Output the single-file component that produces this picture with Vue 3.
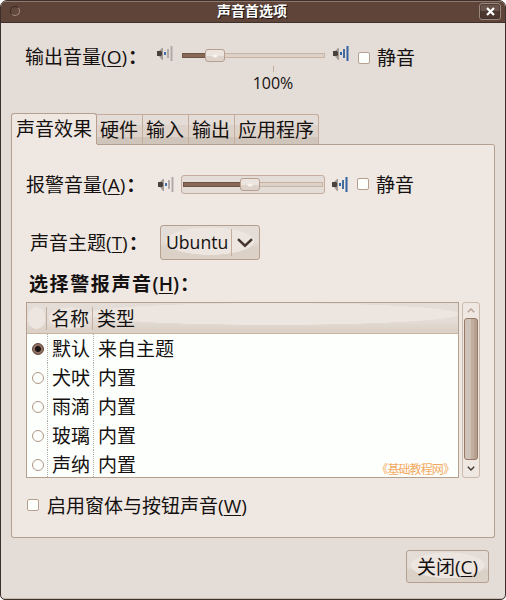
<script setup>
import { ref } from 'vue'

const tabs = ['声音效果', '硬件', '输入', '输出', '应用程序']
const activeTab = ref(0)
const sounds = [
  { name: '默认', type: '来自主题' },
  { name: '犬吠', type: '内置' },
  { name: '雨滴', type: '内置' },
  { name: '玻璃', type: '内置' },
  { name: '声纳', type: '内置' },
]
const selected = ref(0)
const outputMuted = ref(false)
const alertMuted = ref(false)
const windowSounds = ref(false)
</script>

<template>
  <div class="backdrop">
    <div class="window">
      <header class="titlebar">
        <span class="orb"></span>
        <span class="title">声音首选项</span>
        <button class="win-close" aria-label="close">
          <svg width="9" height="9" viewBox="0 0 9 9"><path d="M1 1l7 7M8 1l-7 7" stroke="#fff" stroke-width="2.2" /></svg>
        </button>
      </header>

      <div class="row output-row">
        <label class="txt">输出音量<span class="lat">(<u>O</u>)</span><span class="colon">：</span></label>
        <svg class="speaker" width="16" height="16" viewBox="0 0 16 16">
          <path d="M2 5l3-3h1v12H5l-3-4z" fill="#a39c97" /><path d="M0 5h4l1 1v3l-1 1H0z" fill="#4a403c" />
          <path d="M7 6h2v3H7z" fill="#3d72af" /><path d="M10 3h2v9h-2zM13.5 0h2v15h-2z" fill="#b0aba7" />
        </svg>
        <div class="scale">
          <div class="trough"><div class="fill out"></div><div class="thumb"></div></div>
          <span class="tick"></span>
          <span class="percent">100%</span>
        </div>
        <svg class="speaker" width="16" height="16" viewBox="0 0 16 16">
          <path d="M2 5l3-3h1v12H5l-3-4z" fill="#a39c97" /><path d="M0 5h4l1 1v3l-1 1H0z" fill="#4a403c" />
          <path d="M7 6h2v3H7z" fill="#2c65ab" /><path d="M10 3h2v9h-2z" fill="#436c9c" /><path d="M13.5 0h2v15h-2z" fill="#3263a3" />
        </svg>
        <span class="check" @click="outputMuted = !outputMuted"></span>
        <span class="txt mute">静音</span>
      </div>

      <nav class="tabs">
        <button v-for="(t, i) in tabs" :key="t" :class="['tab', 'txt', { active: i === activeTab }]" @click="activeTab = i">{{ t }}</button>
      </nav>

      <section class="panel">
        <div class="row alert-row">
          <label class="txt">报警音量<span class="lat">(<u>A</u>)</span><span class="colon">：</span></label>
          <svg class="speaker" width="16" height="16" viewBox="0 0 16 16">
            <path d="M2 5l3-3h1v12H5l-3-4z" fill="#a39c97" /><path d="M0 5h4l1 1v3l-1 1H0z" fill="#4a403c" />
            <path d="M7 6h2v3H7z" fill="#3d72af" /><path d="M10 3h2v9h-2zM13.5 0h2v15h-2z" fill="#b0aba7" />
          </svg>
          <div class="focus"><div class="trough"><div class="fill alert"></div><div class="thumb"></div></div></div>
          <svg class="speaker" width="16" height="16" viewBox="0 0 16 16">
            <path d="M2 5l3-3h1v12H5l-3-4z" fill="#a39c97" /><path d="M0 5h4l1 1v3l-1 1H0z" fill="#4a403c" />
            <path d="M7 6h2v3H7z" fill="#2c65ab" /><path d="M10 3h2v9h-2z" fill="#436c9c" /><path d="M13.5 0h2v15h-2z" fill="#3263a3" />
          </svg>
          <span class="check" @click="alertMuted = !alertMuted"></span>
          <span class="txt mute">静音</span>
        </div>

        <div class="row theme-row">
          <label class="txt">声音主题<span class="lat">(<u>T</u>)</span><span class="colon">：</span></label>
          <button class="combo shine">
            <span class="lat combo-text">Ubuntu</span>
            <span class="combo-arrow">
              <svg width="18" height="12" viewBox="0 0 18 12"><path d="M2 2.2l7 6.5 7-6.5" fill="none" stroke="#44352f" stroke-width="2.5" /></svg>
            </span>
          </button>
        </div>

        <h2 class="heading">选择警报声音<span class="lat">(<u>H</u>)</span><span class="colon">：</span></h2>

        <div class="list-area">
          <div class="list">
            <div class="list-head txt">
              <span class="hc h0"></span><span class="hc h1">名称</span><span class="hc h2">类型</span>
            </div>
            <div class="list-body">
              <div v-for="(s, i) in sounds" :key="s.name" class="item txt" @click="selected = i">
                <span class="c0"><i :class="['radio', { on: i === selected }]"></i></span>
                <span class="c1">{{ s.name }}</span>
                <span class="c2">{{ s.type }}</span>
              </div>
              <span class="mark">《基础教程网》</span>
            </div>
          </div>
          <div class="scrollbar">
            <span class="arrow"><svg width="8" height="5" viewBox="0 0 8 5"><path d="M.8 4.2L4 1l3.2 3.2" fill="none" stroke="#b5a294" stroke-width="1.3" /></svg></span>
            <span class="handle"></span>
            <span class="arrow down"><svg width="8" height="5" viewBox="0 0 8 5"><path d="M.8 .8L4 4 7.2 .8" fill="none" stroke="#44352f" stroke-width="1.4" /></svg></span>
          </div>
        </div>

        <div class="row window-row">
          <span class="check" @click="windowSounds = !windowSounds"></span>
          <span class="txt">启用窗体与按钮声音<span class="lat">(<u>W</u>)</span></span>
        </div>
      </section>

      <footer class="footer">
        <button class="close-btn txt shine">关闭<span class="lat">(<u>C</u>)</span></button>
      </footer>
    </div>
  </div>
</template>

<style>
body { background: #fff; }
</style>

<style scoped>
* { box-sizing: border-box; }
button { appearance: none; margin: 0; padding: 0; border: 0; background: none; color: inherit; }
.backdrop { width: 506px; height: 600px; }
.window {
  display: flex; flex-direction: column; width: 506px; height: 600px; overflow: hidden;
  border: 1px solid #3c302d; border-radius: 7px 7px 5px 5px; background: #e4dcd6; color: #141110;
  box-shadow: inset 0 -1px #cabbb0;
}
.txt { font: 19px/32px "Noto Sans CJK SC", sans-serif; white-space: nowrap; }
.lat { font-family: "Open Sans", "Noto Sans", sans-serif; font-size: 19px; line-height: 1; }
.colon { margin-left: 1px; font-weight: 700; }
u { text-decoration: underline; text-decoration-thickness: 1px; text-underline-offset: 2px; }

.titlebar {
  display: grid; grid-template-columns: 30px 1fr 30px; align-items: start; flex: none; height: 22px;
  background: #5e4439; border-top: 1px solid #92786c; border-bottom: 1px solid #3f302b;
}
.orb { width: 10px; height: 10px; margin: 4px 0 0 9px; border-radius: 50%; background: #63493e; border: 1px solid #382a25; border-right-color: #a28b80; border-bottom-color: #a28b80; }
.title { padding-right: 2px; text-align: center; color: #fff; font: bold 14px/16px "Noto Sans CJK SC", sans-serif; text-shadow: 1px 1px 0 #1c1310; }
.win-close { display: flex; align-items: center; justify-content: center; width: 22px; height: 17px; margin: 1px 0 0 4px; border: 1px solid #9b887e; border-radius: 3px; background: linear-gradient(#69534a 50%, #4b3730 50%); box-shadow: inset 0 0 0 1px #35282480; }

.row { display: flex; align-items: flex-start; flex: none; }
.speaker { flex: none; }
.check { flex: none; width: 12px; height: 12px; border: 1px solid #b7a08f; border-radius: 2px; background: #fdfffc; }

.output-row { height: 73px; margin-top: 17px; padding-left: 24px; }
.output-row label { width: 132px; }
.output-row .speaker { margin-top: 6px; }
.scale { display: flex; flex-direction: column; width: 143px; margin: 9px 8px 0 9px; }
.trough { display: grid; align-items: center; height: 13px; background: linear-gradient(#c9b4a4, #c9b4a4) 0 4px / 100% 1px no-repeat, linear-gradient(#c9b4a4, #c9b4a4) 0 8px / 100% 1px no-repeat, linear-gradient(90deg, #c9b4a4 1px, #ddd2c9 1px calc(100% - 1px), #c9b4a4 calc(100% - 1px)) 0 4px / 100% 5px no-repeat; }
.trough > * { grid-area: 1 / 1; }
.fill { height: 5px; background: #876857; border: 1px solid #705344; }
.fill.out { width: 26px; }
.fill.alert { width: 60px; }
.thumb { width: 20px; height: 13px; margin-left: 23px; border: 1px solid #b7a08f; border-radius: 3px; background: radial-gradient(ellipse 4px 2.5px at 50% 55%, #f8f4f1 0 40%, transparent 80%), linear-gradient(#ece4de 50%, #ddd3ca 55%); }
.tick { width: 1px; height: 6px; margin: 4px 0 0 91px; background: #c4ad9c; }
.percent { width: 60px; margin-left: 61px; margin-top: 1px; text-align: center; font: 16px/20px "Open Sans", "Noto Sans", sans-serif; }
.output-row .check { margin: 12px 0 0 9px; }
.mute { margin-left: 7px; }
.output-row .mute { margin-top: 1px; }

.tabs { display: flex; align-items: flex-end; flex: none; height: 31px; padding-left: 10px; }
.tab { height: 30px; width: 46px; padding-left: 3px; text-align: left; line-height: 26px; padding-bottom: 2px; border: 1px solid #c4ad9c; border-left: 0; border-bottom: 0; background: linear-gradient(#e4dcd6 0 10px, #ddd3ca 10px 22px, #d0c5ba 22px); }
.tab:last-child { width: 84px; border-radius: 0 3px 0 0; }
.tab.active { width: 86px; height: 31px; padding-left: 4px; line-height: 28px; border: 1px solid #b5a08f; border-bottom: 0; border-radius: 3px 3px 0 0; background: #efe7e1; }

.panel {
  display: flex; flex-direction: column; flex: none; width: 484px; height: 394px; margin-left: 10px;
  border: 1px solid #b5a08f; border-top: 0; border-radius: 0 3px 3px 3px;
  background: linear-gradient(#b5a08f, #b5a08f) 85px 0 / 100% 1px no-repeat #efe7e1;
}
.alert-row { height: 34px; margin-top: 23px; padding-left: 14px; }
.alert-row label { width: 132px; line-height: 33px; }
.alert-row .mute { line-height: 33px; }
.alert-row .speaker { margin-top: 10px; }
.focus { width: 144px; height: 19px; margin: 8px 7px 0 7px; padding: 2px 1px; border: 1px solid #c4ad9c; border-radius: 3px; background: #e4dcd6; }
.focus .thumb { margin-left: 57px; }
.alert-row .check { margin: 11px 0 0 9px; }

.theme-row { height: 36px; margin-top: 24px; padding-left: 18px; }
.theme-row label { width: 130px; line-height: 33px; }
.shine { border: 1px solid #b5a08f; border-radius: 3px; background: radial-gradient(ellipse 46% 42% at 50% 46%, #ede5df 97%, transparent 100%), linear-gradient(#e4dcd6 50%, #dbd1c7 65%); }
.combo { display: flex; align-items: center; width: 100px; height: 35px; }
.combo-text { width: 70px; padding-left: 5px; text-align: left; font-size: 17.6px; line-height: 33px; height: 33px; }
.combo-arrow { display: flex; align-items: center; height: 27px; padding-left: 4px; border-left: 1px solid #c4ad9c; }

.heading { height: 34px; margin: 5px 0 1px 17px; font: bold 19px/34px "Noto Sans CJK SC", sans-serif; letter-spacing: 1.6px; white-space: nowrap; }
.heading .lat { letter-spacing: 0; font-weight: 600; }

.list-area { display: flex; flex: none; height: 176px; margin: 1px 0 0 14px; gap: 3px; }
.list { width: 433px; border: 1px solid #b5a08f; background: #fdfffc; }
.list-head { display: flex; align-items: center; height: 31px; border-bottom: 1px solid #c9b4a4; background: radial-gradient(ellipse 190px 11px at 57% 11px, #ede5df 97%, transparent), linear-gradient(#e4dcd6 60%, #dbd1c7 90%); }
.hc { height: 23px; line-height: 21px; }
.h0 { width: 20px; border-right: 1px solid #c4ad9c; background: radial-gradient(ellipse 9px 11px at 50% 48%, #ede5df 95%, transparent); }
.h1 { width: 46px; padding-left: 4px; border-right: 1px solid #c4ad9c; background: radial-gradient(ellipse 21px 11px at 50% 48%, #ede5df 95%, transparent); }
.h2 { padding-left: 4px; }
.list-body { position: relative; height: 143px; overflow: hidden; }
.item { display: flex; height: 29px; line-height: 27px; }
.c0 { display: flex; align-items: center; width: 21px; padding: 0 0 0 5px; border-right: 1px dotted #b1aca8; }
.c1 { width: 46px; padding-left: 4px; border-right: 1px dotted #b1aca8; }
.c2 { padding-left: 4px; }
.radio { width: 12px; height: 12px; border: 1px solid #b09585; border-radius: 50%; background: #fdfffc; }
.radio.on { border-color: #5d453a; background: radial-gradient(circle, #1c1513 0 2.6px, #8f7060 3.4px); }
.mark { position: absolute; right: 4px; bottom: 0; color: #f3a95f; font: 12px/16px "Noto Sans CJK SC", sans-serif; white-space: nowrap; letter-spacing: -.9px; }
.scrollbar { display: flex; flex-direction: column; align-items: center; width: 18px; border: 1px solid #ccbaad; border-radius: 3px; }
.arrow { display: flex; align-items: center; justify-content: center; height: 15px; }
.arrow.down { height: 17px; }
.handle { flex: 1; width: 14px; border: 1px solid #987764; border-radius: 3px; background: linear-gradient(90deg, #cfc3b9 0 45%, #c3ad9c 55% 70%, #b39e8f 85%); }

.window-row { height: 34px; margin-top: 11px; padding-left: 15px; }
.window-row .check { margin: 10px 8px 0 0; }
.footer { display: flex; justify-content: flex-end; padding: 12px 16px 0 0; }
.close-btn { width: 83px; height: 33px; line-height: 29px; padding-bottom: 2px; }
</style>
